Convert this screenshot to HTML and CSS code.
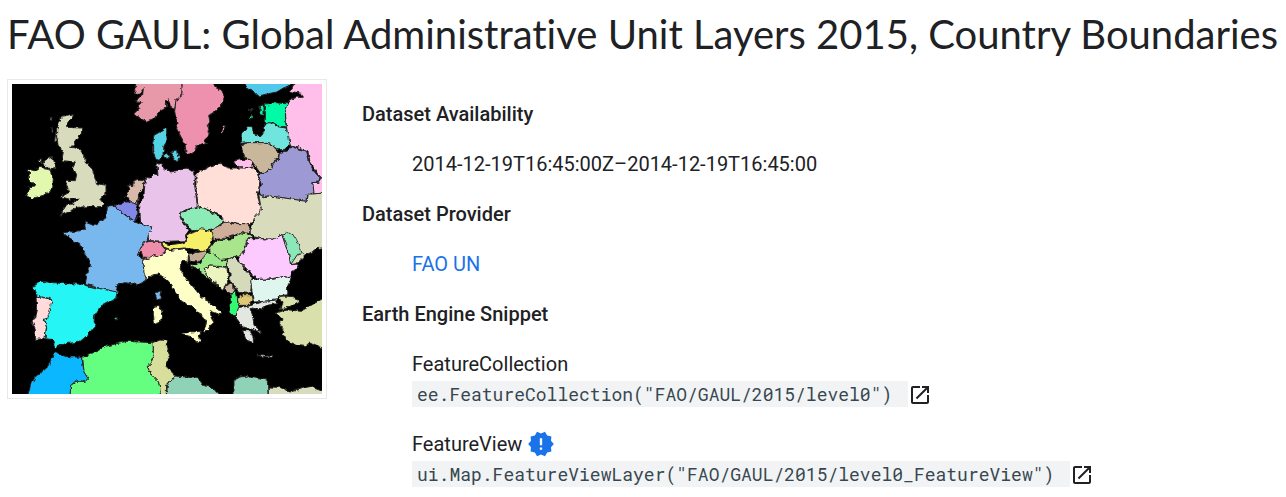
FILE: index.html
```html
<!DOCTYPE html>
<html lang="en">
<head>
<meta charset="utf-8">
<title>FAO GAUL: Global Administrative Unit Layers 2015, Country Boundaries</title>
<link rel="stylesheet" href="styles.css">
</head>
<body>

<h1 class="title">FAO GAUL: Global Administrative Unit Layers 2015, Country Boundaries</h1>

<div class="dataset">
	<div class="preview">
		<svg class="map" viewBox="36 36 930 930" role="img" aria-label="Country boundaries of Europe">
			<defs>
				<filter id="coast" filterUnits="userSpaceOnUse" x="0" y="0" width="1000" height="1000" color-interpolation-filters="sRGB">
					<feTurbulence type="fractalNoise" baseFrequency="0.07" numOctaves="2" seed="4" result="noise"/>
					<feComponentTransfer in="noise" result="shift">
						<feFuncA type="linear" slope="0" intercept="1"/>
					</feComponentTransfer>
					<feDisplacementMap in="SourceGraphic" in2="shift" scale="13" xChannelSelector="R" yChannelSelector="G"/>
				</filter>
			</defs>
			<rect x="36" y="36" width="930" height="930"/>
			<g class="land" filter="url(#coast)">
				<!-- north -->
				<path fill="#e799a9" d="M405 20L408 58 404 68 418 66 430 50 428 66 414 80 408 90 424 92 412 104 420 110 404 126 424 142 442 148 464 138 478 120 500 104 498 88 505 80 512 106 524 112 530 80 546 68 546 20z"/>
				<path fill="#ee91ae" d="M546 20L546 68 528 84 524 118 528 140 534 150 530 170 545 198 556 218 558 248 578 244 584 232 590 224 620 214 614 206 624 198 628 180 622 160 630 150 626 130 640 124 650 112 664 100 674 76 664 56 642 44 642 20zM668 164L676 160 672 180 664 184z"/>
				<path fill="#51c8e9" d="M722 20L728 36 740 46 760 56 776 72 800 66 830 60 850 48 870 40 880 20z"/>
				<path fill="#ffbfea" d="M884 20L878 48 870 58 905 64 910 76 890 76 868 84 864 96 856 120 862 190 870 222 896 228 924 240 930 270 962 320 955 330 938 332 940 366 985 362 985 20z"/>
				<path fill="#00fba6" d="M796 96L830 92 864 96 856 120 858 165 836 162 820 152 796 155zM776 104L792 98 792 130 780 128 784 114zM745 114L757 112 754 118zM745 138L754 126 758 138z"/>
				<path fill="#70e5dd" d="M722 214L724 184 744 166 756 168 766 186 784 192 792 180 790 158 810 152 832 164 858 168 866 190 870 220 852 232 834 234 815 218 790 212 740 212z"/>
				<path fill="#c8b79b" d="M724 222L740 212 790 212 815 218 830 234 838 248 830 262 818 270 816 290 800 300 780 302 770 288 756 268 730 252z"/>
				<path fill="#ffbfea" d="M700 268L726 262 756 264 760 286 718 288 708 280z"/>
				<path fill="#9c99d5" d="M838 248L846 236 866 234 874 224 892 230 920 238 928 270 935 290 960 318 955 330 938 332 942 362 920 370 918 388 880 382 840 376 808 372 790 374 780 366 776 350 784 340 776 305 800 300 816 290 820 270 836 262z"/>
				<path fill="#54d3e5" d="M458 212L462 190 476 182 500 168 500 190 502 205 492 222 490 240 478 265 468 262 458 240zM492 246L504 244 507 258 500 260zM516 238L530 234 532 250 542 246 538 262 530 270 514 250z"/>

				<!-- islands of the west -->
				<path fill="#d8dbbc" d="M184 136L220 128 218 136 204 150 202 166 245 168 244 184 222 214 212 226 240 230 254 250 256 272 276 290 282 310 290 334 318 340 318 364 300 382 312 396 300 404 264 404 232 406 216 414 180 430 200 398 220 396 236 378 210 382 182 374 206 360 196 325 226 326 230 308 218 285 226 270 186 266 190 238 176 222 170 200 170 170zM128 276L140 260 160 256 168 290 150 292zM148 138L156 136 154 150zM156 166L160 180 156 182zM166 190L174 204 164 210z"/>
				<path fill="#e2f8ae" d="M84 292L104 296 120 286 150 294 160 320 158 350 130 370 96 380 80 372 90 350 84 344 106 342 84 318 90 306zM116 264L128 260 124 276z"/>

				<!-- middle -->
				<path fill="#e9c3ea" d="M470 272L488 280 492 290 512 300 530 296 560 288 575 292 586 310 584 340 588 370 592 402 560 412 538 424 542 440 560 468 568 474 556 490 560 506 500 508 446 506 444 492 455 466 430 460 418 440 416 400 432 370 436 316 450 318 462 306 474 308z"/>
				<path fill="#ffdfd8" d="M588 310L600 296 632 282 660 274 672 282 688 288 758 288 772 300 780 330 776 350 772 365 780 400 784 414 772 430 758 450 748 455 730 456 700 452 672 448 660 430 646 424 620 412 594 404 592 380 588 350z"/>
				<path fill="#d8dbbc" d="M776 366L790 374 808 372 840 376 880 382 918 388 922 366 940 366 985 362 985 525 950 530 936 540 918 548 904 562 890 575 872 578 846 488 820 502 786 500 760 494 750 480 756 462 764 435 784 414z"/>
				<path fill="#d8b9aa" d="M376 376L388 352 384 346 390 338 398 344 400 328 416 322 432 322 430 350 416 366 412 394 396 390z"/>
				<path fill="#8188e8" d="M342 400L376 390 400 390 412 396 408 412 414 420 410 440 404 448 380 430 360 418z"/>
				<path fill="#79b8ef" d="M322 404L342 404 360 418 404 450 418 455 430 460 455 466 445 490 440 512 418 540 412 550 430 558 428 575 436 600 440 625 415 638 376 632 350 640 352 660 318 654 300 650 256 636 262 600 272 580 262 555 248 535 240 515 220 505 200 492 190 482 224 478 256 474 254 450 280 460 310 445 320 430zM466 664L482 656 480 682 470 680z"/>
				<path fill="#8cebb7" d="M540 424L570 410 596 404 620 412 648 428 672 448 650 466 632 472 606 474 580 476 566 468 552 450 544 440z"/>
				<path fill="#cfaf99" d="M640 470L660 460 676 448 700 455 745 455 750 470 748 484 720 482 700 492 670 500 640 502 636 486z"/>
				<path fill="#f6ef69" d="M560 508L564 486 590 478 600 470 630 474 640 490 636 505 630 525 610 540 580 532 555 528 510 532 488 524 486 512 510 518 545 514z"/>
				<path fill="#ee8eaa" d="M412 550L418 536 430 512 450 508 484 508 486 525 498 530 494 545 474 552 462 548 448 560 430 558 424 540z"/>
				<path fill="#a9e58d" d="M626 530L640 512 660 504 700 500 720 482 752 488 758 496 742 512 730 540 716 552 690 560 660 562 640 550 628 542z"/>

				<!-- south -->
				<path fill="#feffc6" d="M428 565L450 556 462 548 474 552 494 545 500 530 510 535 555 530 566 545 564 568 545 568 540 590 556 620 576 640 600 670 615 680 640 702 668 724 660 728 630 716 634 736 640 745 625 775 612 778 620 750 610 735 590 715 570 700 545 688 525 660 512 635 500 622 476 606 460 608 440 620 432 600zM545 784L570 780 604 778 598 792 602 808 592 812 570 794 548 788zM460 704L480 700 486 720 482 748 464 754 460 730z"/>
				<path fill="#c3ac96" d="M566 545L600 540 620 536 622 548 608 560 596 570 570 568z"/>
				<path fill="#9be88a" d="M570 578L602 575 610 556 624 542 640 546 660 562 678 566 680 584 630 582 612 590 620 608 652 642 640 630 612 610 596 590 580 585 576 590z"/>
				<path fill="#ebf3be" d="M612 590L630 582 680 586 686 620 676 640 668 652 640 628 620 608z"/>
				<path fill="#d5dabb" d="M680 566L700 556 722 575 738 595 756 615 752 660 740 664 714 660 706 640 690 632 690 600 682 585z"/>
				<path fill="#c9b6a0" d="M672 644L690 636 706 650 702 660 682 664z"/>
				<path fill="#2ffa73" d="M690 665L706 660 710 680 718 705 714 720 702 732 690 720 692 690z"/>
				<path fill="#ddc875" d="M712 680L730 668 756 668 760 684 745 700 716 700z"/>
				<path fill="#fdcaff" d="M742 500L780 500 820 502 846 488 856 520 866 545 872 578 896 576 890 590 876 600 872 616 846 614 820 620 780 622 760 612 748 600 736 586 722 575 716 550 732 540 742 516z"/>
				<path fill="#8ae8b9" d="M846 486L866 482 890 500 898 530 908 544 892 548 880 566 872 578 866 545 860 515z"/>
				<path fill="#dff6ee" d="M752 622L780 622 820 622 850 614 875 618 868 630 862 650 864 668 838 672 830 684 790 688 764 690 756 660z"/>
				<path fill="#e2e7e1" d="M716 706L740 704 760 698 790 688 830 684 832 695 800 700 780 714 760 708 750 710 758 730 762 760 780 775 784 782 750 770 728 765 716 748 706 735zM728 776L752 776 760 800 760 812 738 804zM772 847L818 851 818 856 775 852z"/>
				<path fill="#d9e0ac" d="M836 674L850 672 880 674 898 688 880 698 856 710 840 712 846 694zM828 724L850 716 870 714 902 718 930 702 985 670 985 834 950 820 930 810 915 824 880 818 860 804 848 786 852 778 840 760 846 740z"/>
				<path fill="#25f5f5" d="M98 645L122 628 180 634 240 636 290 648 352 660 348 678 300 705 284 730 282 750 288 758 262 790 238 810 190 816 168 828 156 802 134 800 140 770 134 738 148 718 154 680 108 672zM340 738L352 735 350 744z"/>
				<path fill="#ffdcdb" d="M108 672L154 682 156 690 146 718 148 736 132 742 140 765 134 800 106 802 106 770 96 750 104 735 110 710z"/>
				<path fill="#0bb7ff" d="M166 838L180 848 200 854 246 856 252 900 266 920 256 928 228 926 212 940 210 985 80 985 92 940 105 915 140 888 156 862z"/>
				<path fill="#64ff80" d="M248 856L290 836 320 822 380 808 460 812 460 864 442 884 456 910 476 930 484 985 210 985 212 940 228 928 256 928 264 920 252 900z"/>
				<path fill="#d8df9d" d="M460 812L480 804 498 806 504 830 512 850 495 880 525 910 500 940 498 985 484 985 476 930 456 910 442 884 460 864z"/>
				<path fill="#90d2b8" d="M498 985L502 940 524 912 560 915 596 920 610 940 640 950 672 985zM702 985L702 925 720 915 740 912 760 918 802 924 805 985z"/>
				<path fill="#d8dbbc" d="M805 985L805 945 840 946 870 960 900 952 930 944 985 964 985 985z"/>
			</g>
		</svg>
	</div>

	<dl class="details">
		<dt>Dataset Availability</dt>
		<dd>2014-12-19T16:45:00Z–2014-12-19T16:45:00</dd>
		<dt>Dataset Provider</dt>
		<dd><a class="provider" href="#">FAO UN</a></dd>
		<dt>Earth Engine Snippet</dt>
		<dd>
			<div>FeatureCollection</div>
			<div class="snippet">
				<code>ee.FeatureCollection("FAO/GAUL/2015/level0") </code>
				<a class="open" href="#" aria-label="Open FeatureCollection"><svg viewBox="0 0 24 24"><path d="M19 19H5V5h7V3H5c-1.100 0-2 .9-2 2v14c0 1.100.9 2 2 2h14c1.100 0 2-.9 2-2v-7h-2v7zM14 3v2h3.590l-9.830 9.830 1.410 1.410L19 6.410V10h2V3h-7z"/></svg></a>
			</div>
		</dd>
		<dd>
			<div class="label">FeatureView
				<svg class="badge" viewBox="0 0 24 24"><path d="M23 12l-2.440-2.780.34-3.680-3.610-.82-1.890-3.180L12 3 8.600 1.540 6.710 4.720l-3.610.81.34 3.680L1 12l2.440 2.780-.34 3.690 3.610.82 1.890 3.180L12 21l3.400 1.460 1.890-3.180 3.610-.82-.34-3.680L23 12zm-10 5h-2v-2h2v2zm0-4h-2V7h2v6z"/></svg>
			</div>
			<div class="snippet">
				<code>ui.Map.FeatureViewLayer("FAO/GAUL/2015/level0_FeatureView") </code>
				<a class="open" href="#" aria-label="Open FeatureView"><svg viewBox="0 0 24 24"><path d="M19 19H5V5h7V3H5c-1.100 0-2 .9-2 2v14c0 1.100.9 2 2 2h14c1.100 0 2-.9 2-2v-7h-2v7zM14 3v2h3.590l-9.830 9.830 1.410 1.410L19 6.410V10h2V3h-7z"/></svg></a>
			</div>
		</dd>
	</dl>
</div>

</body>
</html>
```
FILE: styles.css
```css
* {margin:0; padding:0; box-sizing:border-box;}

body {padding:8px 7px 0; background:#fff; color:#202124; font:20px/30px Roboto, "Liberation Sans", sans-serif;}

.title {font:400 40px/52px Lato, sans-serif; font-variant-ligatures:none; white-space:nowrap;}

.dataset {display:flex; align-items:flex-start; gap:35px; margin-top:19px;}
.preview {flex:none; padding:4px; border:1px solid #e8e8e8;}
.map {display:block; width:310px; height:310px;}
.land {stroke:#262626; stroke-width:3; stroke-linejoin:round;}

.details {flex:1; padding-top:20px;}
.details dt {font-weight:500; margin-bottom:20px;}
.details dd {margin:0 0 20px 50px;}
.details dd:last-child {margin-bottom:0;}

.provider {color:#1a73e8; text-decoration:none;}

.label {display:flex; align-items:center; gap:5px;}
.badge {width:28px; height:28px; fill:#1a73e8;}

.snippet {display:flex; align-items:center; height:30px;}
.snippet code {padding:0 5px; background:#f1f3f4; color:#37474f; font:18px/26px "Roboto Mono", "Liberation Mono", monospace; white-space:pre;}
.open {display:block; padding-top:2px; color:#202124;}
.open svg {display:block; width:24px; height:24px; fill:currentColor;}
```
